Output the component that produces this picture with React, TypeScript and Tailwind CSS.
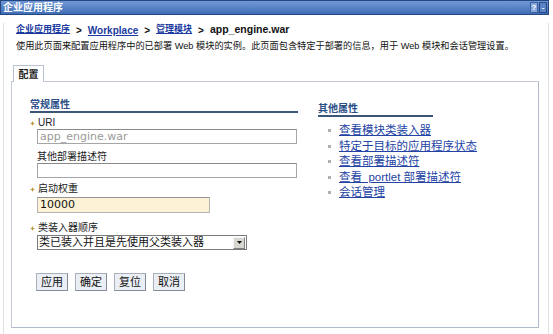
const font = "font-['Liberation_Sans','Noto_Sans_CJK_SC',sans-serif]";

function Star() {
    return (
        <span className="inline-flex w-[8px] shrink-0 items-center justify-start">
            <svg width="5" height="5" viewBox="0 0 5 5">
                <path d="M2.5 0 L3.2 1.8 L5 2.5 L3.2 3.2 L2.5 5 L1.8 3.2 L0 2.5 L1.8 1.8 Z" fill="#b89a3c" />
            </svg>
        </span>
    );
}

function Field({ label, required, children, className }: { label: string; required?: boolean; children: React.ReactNode; className?: string }) {
    return (
        <div className={className}>
            <div className={`flex items-center h-[12px] text-[10px] leading-[12px] text-[#222] ${required ? "" : "pl-[7px]"}`}>
                {required && <Star />}
                <span>{label}</span>
            </div>
            {children}
        </div>
    );
}

const links = [
    "查看模块类装入器",
    "特定于目标的应用程序状态",
    "查看部署描述符",
    "查看  portlet 部署描述符",
    "会话管理",
];

export default function App() {
    return (
        <div className={`w-[553px] h-[334px] bg-white overflow-hidden ${font}`}>
            {/* title bar */}
            <div className="flex items-center justify-between w-[549px] h-[15px] bg-gradient-to-b from-[#7199d6] to-[#3f6db5] border border-[#26467f] pl-[2px]">
                <span className="text-white font-bold text-[10px] leading-[13px]">企业应用程序</span>
                <div className="flex items-center gap-[1px] pr-[1px]">
                    <span className="w-[8px] h-[11px] bg-[#86a8dc] border border-[#3d62a0] text-[8px] leading-[9px] text-white font-bold text-center">?</span>
                    <span className="w-[8px] h-[11px] bg-[#5b82c4] border border-[#2a4a84] text-[8px] leading-[9px] text-white font-bold text-center">-</span>
                </div>
            </div>

            <div className="ml-[3px] w-[546px] h-[319px] border-l border-r border-[#dde1e8] pl-[12px]">
                {/* breadcrumb */}
                <div className="mt-[8px] flex items-center h-[14px] text-[10px] font-bold text-[#111] gap-[6px]">
                    <a className="text-[#1b3aa0] underline text-[9px]">企业应用程序</a>
                    <span>&gt;</span>
                    <a className="text-[#1b3aa0] underline">Workplace</a>
                    <span>&gt;</span>
                    <a className="text-[#1b3aa0] underline text-[9px]">管理模块</a>
                    <span>&gt;</span>
                    <span className="text-[10.5px]">app_engine.war</span>
                </div>
                <p className="mt-[3px] h-[13px] text-[9.2px] leading-[13px] text-[#111] whitespace-nowrap">
                    使用此页面来配置应用程序中的已部署 Web 模块的实例。此页面包含特定于部署的信息，用于 Web 模块和会话管理设置。
                </p>

                {/* tab */}
                <div className="mt-[12px] -ml-[3px] relative z-10 w-[31px] h-[17px] -mb-px bg-white border border-b-0 border-[#b9c1d2] flex items-center justify-center text-[10px] font-bold text-[#222]">
                    配置
                </div>
                <div className="-ml-[5px] w-[528px] h-[247px] border border-[#c2c8d8] border-r-[#b3b9cc] border-b-[#b3b9cc] pl-[18px] pt-[17px] flex gap-[20px]">
                    {/* left column */}
                    <div className="w-[268px]">
                        <div className="text-[10px] leading-[12px] font-bold text-[#2b4f86] border-b-2 border-[#3b5679] h-[14px]">常规属性</div>

                        <Field label="URI" required className="mt-[4px]">
                            <div className="ml-[7px] w-[260px] h-[15px] border border-[#a6a6a6] border-t-[#8a8a8a] px-[2px] text-[11px] leading-[13px] text-[#9a9a9a] font-['DejaVu_Sans',sans-serif]">
                                app_engine.war
                            </div>
                        </Field>

                        <Field label="其他部署描述符" className="mt-[7px]">
                            <div className="ml-[7px] w-[260px] h-[15px] border border-[#a6a6a6] border-t-[#8a8a8a] bg-white" />
                        </Field>

                        <Field label="启动权重" required className="mt-[5px]">
                            <div className="mt-[2px] ml-[7px] w-[173px] h-[16px] border border-[#b4b4b4] border-t-[#949494] bg-[#fdf2d6] px-[2px] text-[11px] leading-[14px] text-[#111] font-['DejaVu_Sans',sans-serif]">
                                10000
                            </div>
                        </Field>

                        <Field label="类装入器顺序" required className="mt-[9px]">
                            <div className="mt-[1px] ml-[7px] w-[210px] h-[15px] border border-[#7a7a7a] bg-white flex items-center justify-between">
                                <span className="pl-[1px] text-[11px] leading-[13px] text-[#111]">类已装入并且是先使用父类装入器</span>
                                <span className="w-[12px] h-[12px] mr-[1px] bg-[#d8d6d0] border border-[#f4f4f4] border-r-[#808080] border-b-[#808080] flex items-center justify-center">
                                    <svg width="5" height="3" viewBox="0 0 5 3"><path d="M0 0 H5 L2.5 3 Z" fill="#111" /></svg>
                                </span>
                            </div>
                        </Field>

                        <div className="mt-[23px] ml-[6px] flex gap-[7px]">
                            {["应用", "确定", "复位", "取消"].map((b) => (
                                <button key={b} className="h-[18px] px-[4px] bg-[#eaeef5] border border-[#858b97] border-t-[#aab0bb] border-l-[#aab0bb] text-[11px] leading-[14px] text-[#111]">
                                    {b}
                                </button>
                            ))}
                        </div>
                    </div>

                    {/* right column */}
                    <div className="w-[115px] pt-[4px]">
                        <div className="text-[10px] leading-[12px] font-bold text-[#2b4f86] border-b-2 border-[#3b5679] h-[14px]">其他属性</div>
                        <ul className="mt-[6px]">
                            {links.map((l) => (
                                <li key={l} className="flex items-center h-[15.5px] whitespace-nowrap">
                                    <span className="ml-[10px] w-[3px] h-[3px] shrink-0 bg-[#b0b0b0]" />
                                    <a className="ml-[8px] shrink-0 text-[11.5px] leading-[15px] text-[#2342a4] underline whitespace-pre">{l}</a>
                                </li>
                            ))}
                        </ul>
                    </div>
                </div>
            </div>
        </div>
    );
}
